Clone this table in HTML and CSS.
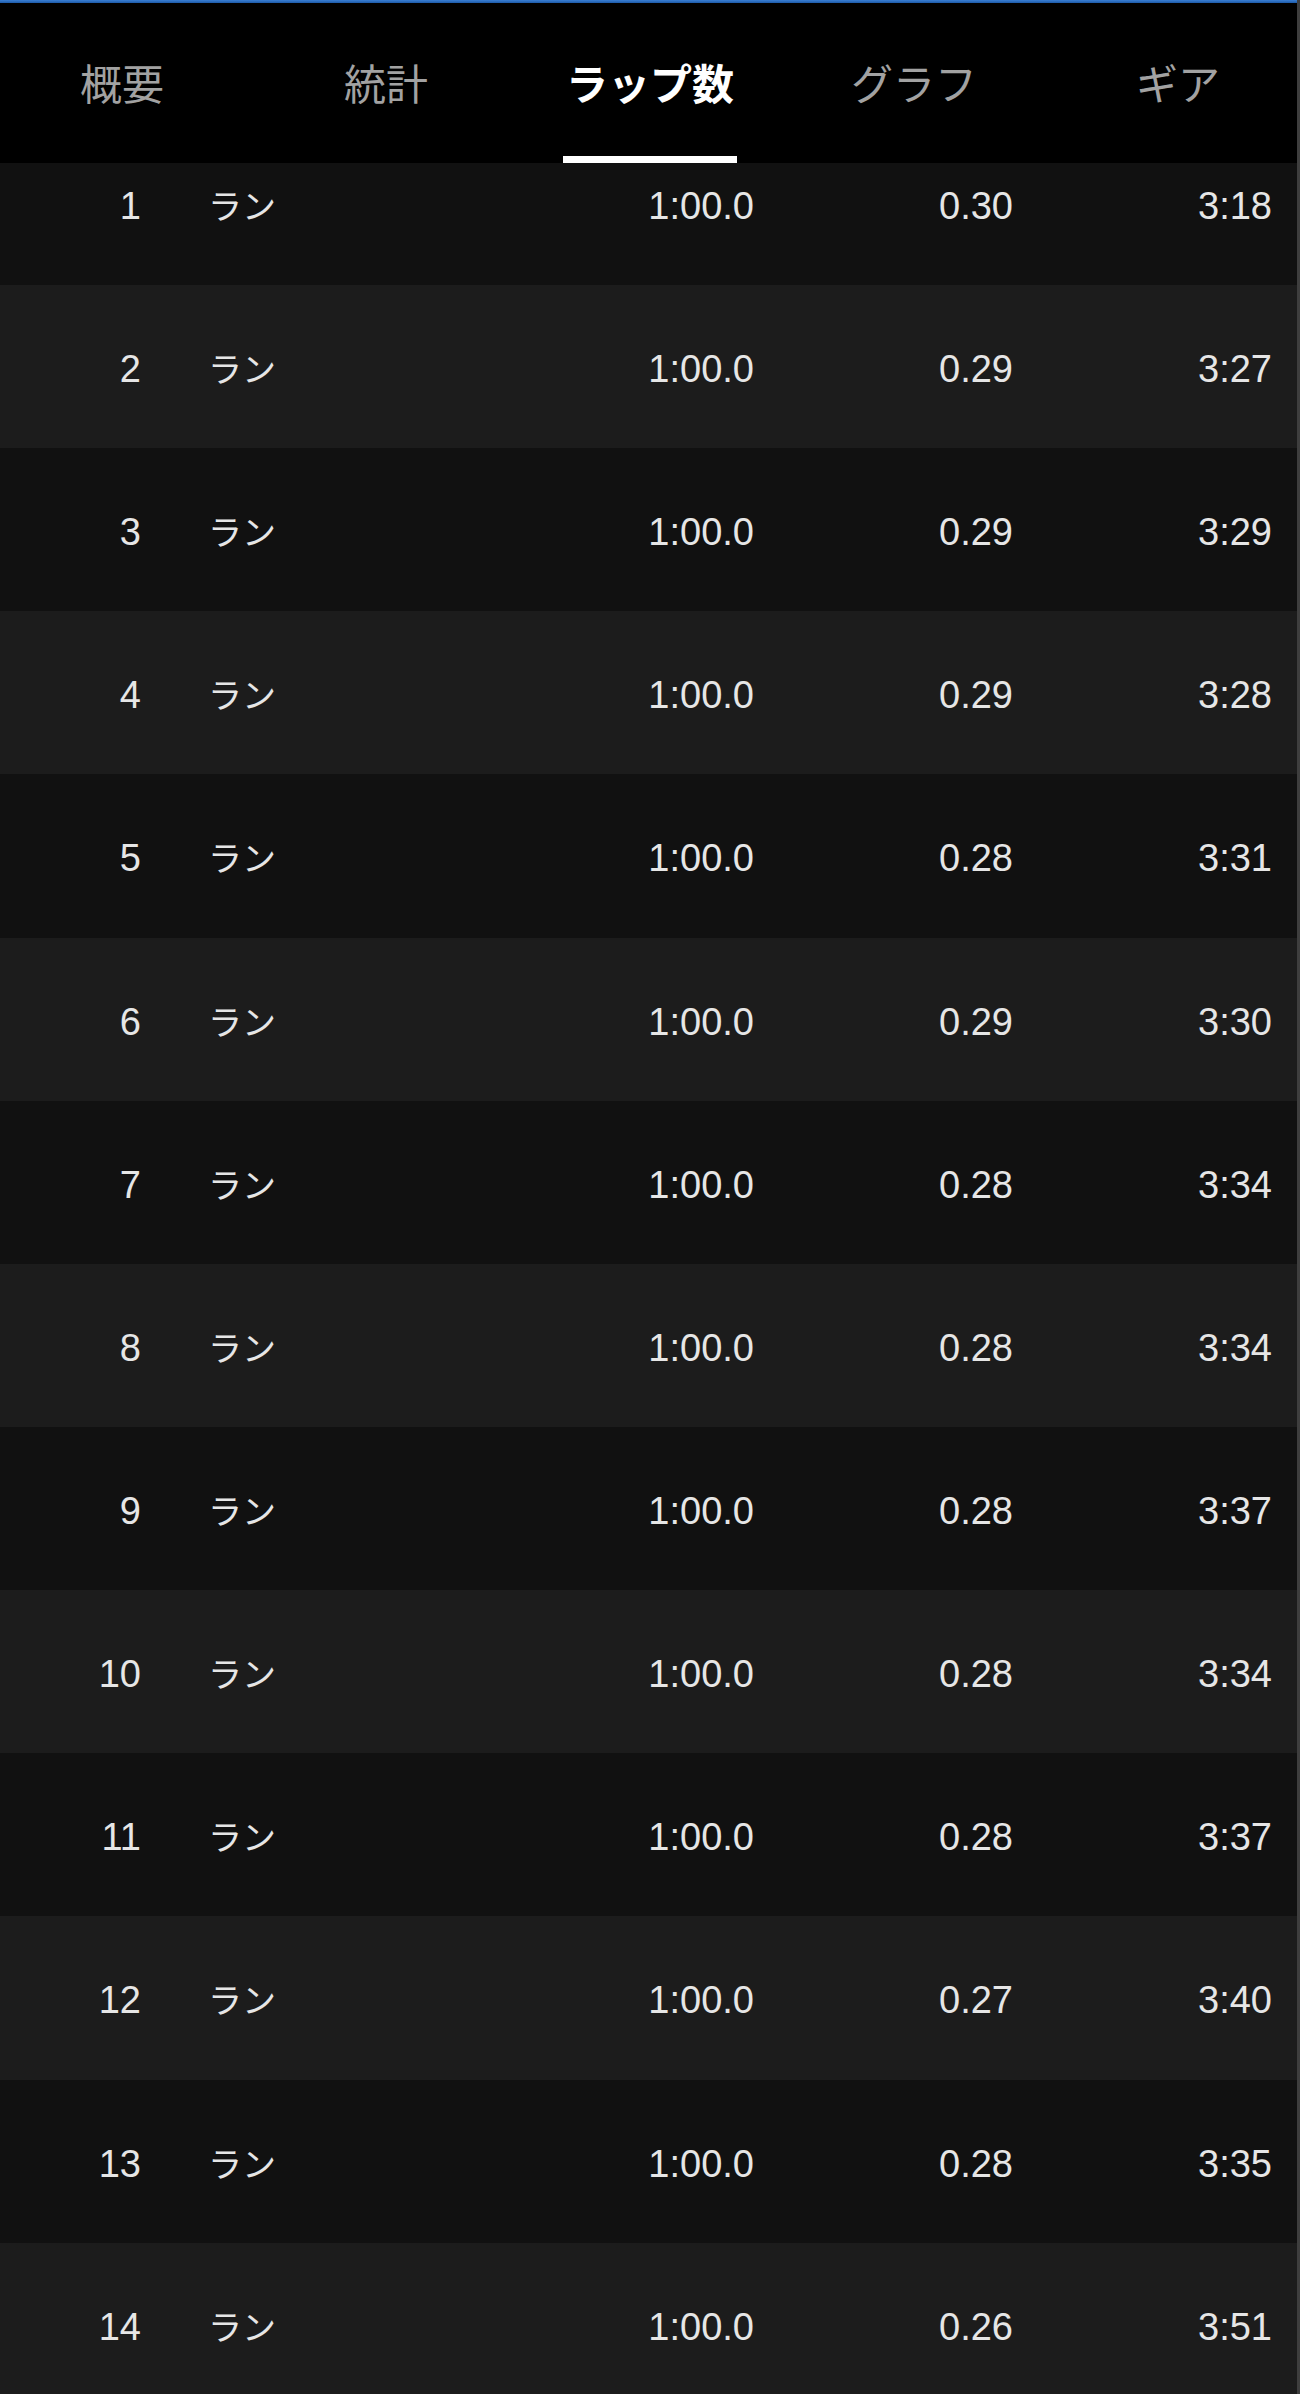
FILE: index.html
```html
<!DOCTYPE html>
<html lang="ja">
<head>
<meta charset="utf-8">
<title>ラップ数</title>
<link rel="stylesheet" href="styles.css">
</head>
<body>
<div class="screen">
  <div class="topbar"></div>
  <nav class="tabbar">
    <div class="tabs">
      <div class="tab"><span class="label">概要</span></div>
      <div class="tab"><span class="label">統計</span></div>
      <div class="tab active"><span class="label">ラップ数</span></div>
      <div class="tab"><span class="label">グラフ</span></div>
      <div class="tab"><span class="label">ギア</span></div>
    </div>
  </nav>
  <main class="laps">
    <div class="laps-inner">
      <div class="row"><span class="num">1</span><span class="name">ラン</span><span class="val">1:00.0</span><span class="val">0.30</span><span class="val">3:18</span></div>
      <div class="row"><span class="num">2</span><span class="name">ラン</span><span class="val">1:00.0</span><span class="val">0.29</span><span class="val">3:27</span></div>
      <div class="row"><span class="num">3</span><span class="name">ラン</span><span class="val">1:00.0</span><span class="val">0.29</span><span class="val">3:29</span></div>
      <div class="row"><span class="num">4</span><span class="name">ラン</span><span class="val">1:00.0</span><span class="val">0.29</span><span class="val">3:28</span></div>
      <div class="row"><span class="num">5</span><span class="name">ラン</span><span class="val">1:00.0</span><span class="val">0.28</span><span class="val">3:31</span></div>
      <div class="row"><span class="num">6</span><span class="name">ラン</span><span class="val">1:00.0</span><span class="val">0.29</span><span class="val">3:30</span></div>
      <div class="row"><span class="num">7</span><span class="name">ラン</span><span class="val">1:00.0</span><span class="val">0.28</span><span class="val">3:34</span></div>
      <div class="row"><span class="num">8</span><span class="name">ラン</span><span class="val">1:00.0</span><span class="val">0.28</span><span class="val">3:34</span></div>
      <div class="row"><span class="num">9</span><span class="name">ラン</span><span class="val">1:00.0</span><span class="val">0.28</span><span class="val">3:37</span></div>
      <div class="row"><span class="num">10</span><span class="name">ラン</span><span class="val">1:00.0</span><span class="val">0.28</span><span class="val">3:34</span></div>
      <div class="row"><span class="num">11</span><span class="name">ラン</span><span class="val">1:00.0</span><span class="val">0.28</span><span class="val">3:37</span></div>
      <div class="row"><span class="num">12</span><span class="name">ラン</span><span class="val">1:00.0</span><span class="val">0.27</span><span class="val">3:40</span></div>
      <div class="row"><span class="num">13</span><span class="name">ラン</span><span class="val">1:00.0</span><span class="val">0.28</span><span class="val">3:35</span></div>
      <div class="row"><span class="num">14</span><span class="name">ラン</span><span class="val">1:00.0</span><span class="val">0.26</span><span class="val">3:51</span></div>
    </div>
  </main>
</div>
</body>
</html>
```
FILE: styles.css
```css
html, body {
  margin: 0;
  padding: 0;
  background: #000;
}

.screen {
  width: 1300px;
  height: 2394px;
  overflow: hidden;
  box-sizing: border-box;
  border-right: 3px solid #3e3e3e;
  background: #000;
  display: flex;
  flex-direction: column;
  font-family: "Liberation Sans", "Noto Sans CJK JP", sans-serif;
}

.topbar {
  height: 3px;
  flex: none;
  background: linear-gradient(#3a7fd4, #1d5aa8);
}

.tabbar {
  flex: none;
  height: 160px;
  overflow: hidden;
  background: #000;
}

.tabs {
  display: grid;
  grid-template-columns: repeat(5, 264px);
  margin-left: -10px;
}

.tab {
  display: flex;
  flex-direction: column;
  align-items: center;
}

.label {
  margin-top: 58px;
  font-family: "Noto Sans CJK JP", sans-serif;
  font-size: 42px;
  line-height: 42px;
  padding: 0 3px 53px;
  border-bottom: 7px solid transparent;
  color: #a2a2a2;
}

.tab.active .label {
  color: #fff;
  font-weight: 700;
  border-bottom-color: #fff;
}

.laps {
  flex: 1;
  overflow: hidden;
  background: #1c1c1c;
}

.laps-inner {
  margin-top: -41.15px;
}

.row {
  height: 163.15px;
  box-sizing: border-box;
  padding: 62px 25px 0 0;
  display: grid;
  grid-template-columns: 141px 354px 259px 259px 259px;
  align-items: baseline;
  align-content: start;
  color: #e6e6e6;
  font-size: 38px;
  line-height: 42px;
  background: #111;
}

.row:nth-child(even) {
  background: #1c1c1c;
}

.num {
  text-align: right;
}

.name {
  padding-left: 67px;
  font-family: "Noto Sans CJK JP", sans-serif;
  font-size: 34px;
}

.val {
  text-align: right;
}
```
